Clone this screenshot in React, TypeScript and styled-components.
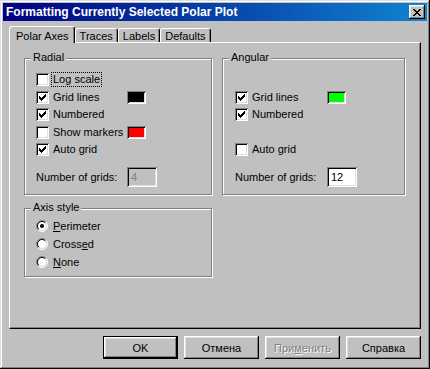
import React from 'react'
import styled, { createGlobalStyle } from 'styled-components'

const GlobalStyle = createGlobalStyle`
  html, body {
    margin: 0;
    padding: 0;
    background: #c0c0c0;
  }
  body {
    font-family: "Liberation Sans", Arial, sans-serif;
    font-size: 11px;
    color: #000;
  }
`

const raised = `
  box-shadow: inset -1px -1px 0 #000, inset 1px 1px 0 #fff, inset -2px -2px 0 #808080, inset 2px 2px 0 #dfdfdf;
`

const sunken = `
  box-shadow: inset 1px 1px 0 #808080, inset -1px -1px 0 #fff, inset 2px 2px 0 #000, inset -2px -2px 0 #dfdfdf;
`

const Window = styled.div`
  width: 430px;
  height: 369px;
  box-sizing: border-box;
  padding: 3px;
  background: #c0c0c0;
  box-shadow: inset -1px -1px 0 #000, inset 1px 1px 0 #dfdfdf, inset -2px -2px 0 #808080, inset 2px 2px 0 #fff;
  display: flex;
  flex-direction: column;
`

const TitleBar = styled.div`
  height: 18px;
  flex: none;
  background: linear-gradient(to right, #000080, #1084d0);
  display: flex;
  align-items: center;
  justify-content: space-between;
  padding: 0 2px 0 3px;
  color: #fff;
  font-weight: bold;
  font-size: 12px;
`

const CloseButton = styled.div`
  width: 16px;
  height: 14px;
  background: #c0c0c0;
  ${raised}
  display: flex;
  align-items: center;
  justify-content: center;
`

const TabStrip = styled.div`
  display: flex;
  align-items: flex-end;
  height: 16px;
  margin: 5px 0 0 6px;
  position: relative;
  z-index: 1;
`

const Tab = styled.div<{ $active?: boolean }>`
  box-sizing: border-box;
  height: ${p => (p.$active ? '17px' : '14px')};
  margin-bottom: ${p => (p.$active ? '-1px' : '0')};
  padding: ${p => (p.$active ? '1px 5px 0 6px' : '0 4px')};
  background: #c0c0c0;
  border-top: 1px solid #fff;
  border-left: 1px solid #fff;
  border-right: 1px solid #000;
  border-radius: 3px 3px 0 0;
  box-shadow: inset -1px 0 0 #808080;
  display: flex;
  align-items: center;
  white-space: nowrap;
`

const TabPanel = styled.div`
  box-sizing: border-box;
  width: 412px;
  height: 287px;
  margin-left: 6px;
  padding: 15px 0 0 14px;
  background: #c0c0c0;
  border-top: 1px solid #fff;
  border-left: 1px solid #fff;
  border-right: 1px solid #000;
  border-bottom: 1px solid #000;
  box-shadow: inset -1px -1px 0 #808080;
  display: grid;
  grid-template-columns: 188px 183px;
  grid-template-rows: 137px 69px;
  column-gap: 10px;
  row-gap: 13px;
  align-content: start;
`

const GroupBox = styled.div<{ $pad: string }>`
  position: relative;
  box-sizing: border-box;
  border: 1px solid #808080;
  box-shadow: inset 1px 1px 0 #fff, 1px 1px 0 #fff;
  padding: ${p => p.$pad};
  display: flex;
  flex-direction: column;
`

const GroupLabel = styled.span`
  position: absolute;
  top: -8px;
  left: 6px;
  padding: 0 2px;
  background: #c0c0c0;
  line-height: 13px;
`

const Row = styled.div<{ $h?: number }>`
  height: ${p => p.$h ?? 17.5}px;
  display: flex;
  align-items: center;
`

const CheckBox = styled.span`
  width: 13px;
  height: 13px;
  flex: none;
  background: #fff;
  ${sunken}
  display: flex;
  align-items: center;
  justify-content: center;
  margin-right: 4px;
`

const Label = styled.span<{ $w?: number; $focus?: boolean }>`
  width: ${p => (p.$w ? `${p.$w}px` : 'auto')};
  flex: none;
  line-height: 13px;
  white-space: nowrap;
  ${p => (p.$focus ? 'outline: 1px dotted #000; outline-offset: 0; padding: 0 1px; margin-left: -1px;' : '')}
`

const FieldLabel = styled.span<{ $w: number }>`
  width: ${p => p.$w}px;
  flex: none;
  white-space: nowrap;
`

const Swatch = styled.span<{ $color: string }>`
  width: 19px;
  height: 13px;
  background: ${p => p.$color};
  ${sunken}
`

const NumberInput = styled.div<{ $disabled?: boolean }>`
  width: 30px;
  height: 20px;
  box-sizing: border-box;
  padding: 0 4px;
  background: ${p => (p.$disabled ? '#c0c0c0' : '#fff')};
  color: ${p => (p.$disabled ? '#808080' : '#000')};
  ${sunken}
  display: flex;
  align-items: center;
`

const Radio = styled.span`
  width: 12px;
  height: 12px;
  flex: none;
  margin-right: 5px;
  display: flex;
`

const ButtonBar = styled.div`
  display: flex;
  justify-content: flex-end;
  gap: 6px;
  padding: 7px 6px 0 0;
`

const Button = styled.div<{ $default?: boolean; $disabled?: boolean }>`
  box-sizing: border-box;
  width: 75px;
  height: 23px;
  background: #c0c0c0;
  border: ${p => (p.$default ? '1px solid #000' : 'none')};
  ${raised}
  display: flex;
  align-items: center;
  justify-content: center;
  color: ${p => (p.$disabled ? '#808080' : '#000')};
  text-shadow: ${p => (p.$disabled ? '1px 1px 0 #fff' : 'none')};
`

const pixels = (rows: string[]) =>
  rows
    .map((row, y) => {
      let d = ''
      let x = 0
      while (x < row.length) {
        if (row[x] === '#') {
          let w = 0
          while (row[x + w] === '#') w++
          d += `M${x} ${y}h${w}v1h-${w}z`
          x += w
        } else x++
      }
      return d
    })
    .join('')

const CHECK = pixels(['......#', '.....##', '#...###', '##.###.', '#####..', '.###...', '..#....'])
const CROSS = pixels(['##....##', '.##..##.', '..####..', '...##...', '..####..', '.##..##.', '##....##'])

const Check = ({ checked }: { checked: boolean }) => (
  <CheckBox>
    {checked && (
      <svg width="7" height="7" viewBox="0 0 7 7" shapeRendering="crispEdges">
        <path d={CHECK} fill="#000" />
      </svg>
    )}
  </CheckBox>
)

const RadioDot = ({ checked }: { checked: boolean }) => (
  <Radio>
    <svg width="12" height="12" viewBox="0 0 12 12">
      <circle cx="6" cy="6" r="4.5" fill="#fff" />
      <path d="M2.1 9.9A5.5 5.5 0 0 1 9.9 2.1" fill="none" stroke="#808080" />
      <path d="M9.9 2.1A5.5 5.5 0 0 1 2.1 9.9" fill="none" stroke="#fff" />
      <path d="M2.8 9.2A4.5 4.5 0 0 1 9.2 2.8" fill="none" stroke="#000" />
      <path d="M9.2 2.8A4.5 4.5 0 0 1 2.8 9.2" fill="none" stroke="#dfdfdf" />
      {checked && <circle cx="6" cy="6" r="2" fill="#000" />}
    </svg>
  </Radio>
)

interface CheckRow {
  label: string
  checked: boolean
  swatch?: string
  focus?: boolean
}

const radialRows: (CheckRow | null)[] = [
  { label: 'Log scale', checked: false, focus: true },
  { label: 'Grid lines', checked: true, swatch: '#000000' },
  { label: 'Numbered', checked: true },
  { label: 'Show markers', checked: false, swatch: '#ff0000' },
  { label: 'Auto grid', checked: true },
]

const angularRows: (CheckRow | null)[] = [
  null,
  { label: 'Grid lines', checked: true, swatch: '#00ff00' },
  { label: 'Numbered', checked: true },
  null,
  { label: 'Auto grid', checked: false },
]

const CheckList = ({ rows, labelWidth }: { rows: (CheckRow | null)[]; labelWidth: number }) => (
  <>
    {rows.map((r, i) =>
      r ? (
        <Row key={i}>
          <Check checked={r.checked} />
          <Label $w={r.swatch ? labelWidth : undefined} $focus={r.focus}>
            {r.label}
          </Label>
          {r.swatch && <Swatch $color={r.swatch} />}
        </Row>
      ) : (
        <Row key={i} />
      )
    )}
  </>
)

const App: React.FC = () => (
  <>
    <GlobalStyle />
    <Window>
      <TitleBar>
        <span>Formatting Currently Selected Polar Plot</span>
        <CloseButton>
          <svg width="8" height="7" viewBox="0 0 8 7" shapeRendering="crispEdges">
            <path d={CROSS} fill="#000" />
          </svg>
        </CloseButton>
      </TitleBar>

      <TabStrip>
        <Tab $active>Polar Axes</Tab>
        <Tab>Traces</Tab>
        <Tab>Labels</Tab>
        <Tab>Defaults</Tab>
      </TabStrip>

      <TabPanel>
        <GroupBox $pad="12px 0 0 11px">
          <GroupLabel>Radial</GroupLabel>
          <CheckList rows={radialRows} labelWidth={74} />
          <Row $h={20} style={{ marginTop: 8 }}>
            <FieldLabel $w={91}>Number of grids:</FieldLabel>
            <NumberInput $disabled>4</NumberInput>
          </Row>
        </GroupBox>

        <GroupBox $pad="12px 0 0 12px">
          <GroupLabel>Angular</GroupLabel>
          <CheckList rows={angularRows} labelWidth={75} />
          <Row $h={20} style={{ marginTop: 8 }}>
            <FieldLabel $w={92}>Number of grids:</FieldLabel>
            <NumberInput>12</NumberInput>
          </Row>
        </GroupBox>

        <GroupBox $pad="8px 0 0 11px">
          <GroupLabel>Axis style</GroupLabel>
          <Row $h={18}>
            <RadioDot checked />
            <Label>
              <u>P</u>erimeter
            </Label>
          </Row>
          <Row $h={18}>
            <RadioDot checked={false} />
            <Label>
              Cross<u>e</u>d
            </Label>
          </Row>
          <Row $h={18}>
            <RadioDot checked={false} />
            <Label>
              <u>N</u>one
            </Label>
          </Row>
        </GroupBox>
      </TabPanel>

      <ButtonBar>
        <Button $default>OK</Button>
        <Button>Отмена</Button>
        <Button $disabled>
          <span>
            При<u>м</u>енить
          </span>
        </Button>
        <Button>Справка</Button>
      </ButtonBar>
    </Window>
  </>
)

export default App
